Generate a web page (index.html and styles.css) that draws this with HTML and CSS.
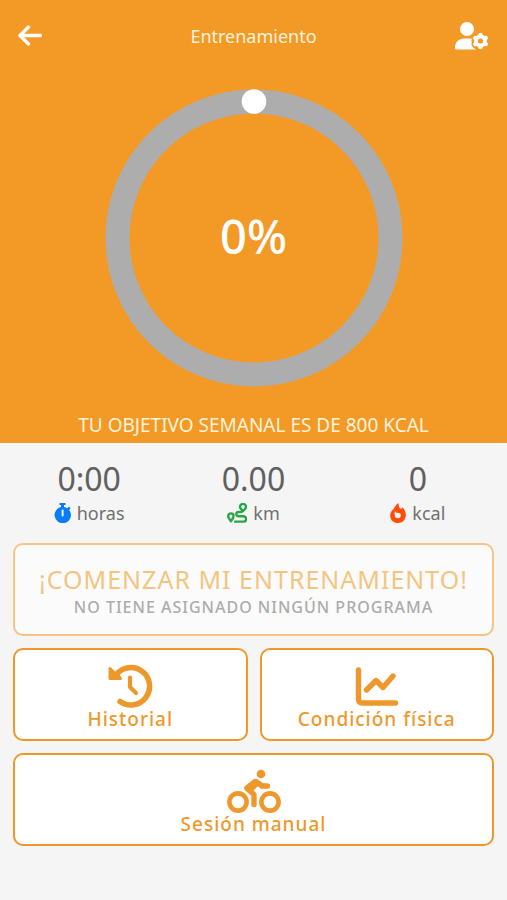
FILE: index.html
```html
<!DOCTYPE html>
<html lang="es">
<head>
<meta charset="utf-8">
<meta name="viewport" content="width=device-width, initial-scale=1">
<title>Entrenamiento</title>
<link rel="stylesheet" href="styles.css">
</head>
<body>
<header class="hero">
  <nav class="topbar">
    <a class="nav-link" href="#" aria-label="Volver">
      <svg width="26" height="24" viewBox="0 0 26 24" fill="none" stroke="currentColor" stroke-width="3.400" stroke-linecap="round" stroke-linejoin="round"><path d="M2 11.500H22.500M10.500 3L2 11.500L10.500 20"/></svg>
    </a>
    <h1 class="title">Entrenamiento</h1>
    <a class="nav-link nav-end" href="#" aria-label="Ajustes de usuario">
      <svg width="34" height="28" viewBox="0 0 34 28" fill="currentColor">
        <circle cx="12" cy="7" r="7"/>
        <path d="M0 26C0 20 4 16.500 9 16.500H15Q16.500 16.500 17.500 16.900Q15.500 18 17 20Q15.500 22 17.500 24.500Q18.500 26.500 21 27.500H1.500Q0 27.500 0 26Z"/>
        <g transform="translate(25.500 19)" stroke="currentColor">
          <circle r="4.500" fill="none" stroke-width="3.800"/>
          <path stroke-width="4.400" stroke-linejoin="round" stroke-linecap="round" d="M0-5.500V-6M0 5.500V6M4.800-2.800L5.200-3M-4.800-2.800L-5.200-3M4.800 2.800L5.200 3M-4.800 2.800L-5.200 3"/>
        </g>
      </svg>
    </a>
  </nav>
  <div class="progress">
    <svg class="ring" viewBox="0 0 298 298" aria-hidden="true">
      <circle cx="149" cy="149" r="136.500" fill="none" stroke="#adadad" stroke-width="24"/>
      <circle cx="149" cy="12.500" r="12.300" fill="#fff"/>
    </svg>
    <strong class="percent">0%</strong>
  </div>
  <p class="goal">TU OBJETIVO SEMANAL ES DE 800 KCAL</p>
</header>
<main>
  <section class="stats">
    <div class="stat">
      <span class="value">0:00</span>
      <span class="unit">
        <svg width="17" height="20" viewBox="0 0 17 20"><path fill="#087df5" d="M5.500 0H11.500V2H10V4Q12 4.300 13.300 5.200L15 3.600L16.600 5.200L15.200 7Q17 9.200 17 11.800A8.200 8.200 0 1 1 7 4V2H5.500Z"/><path d="M8.600 7.500V12.500" stroke="#f5f5f5" stroke-width="2" stroke-linecap="round"/></svg>
        horas</span>
    </div>
    <div class="stat">
      <span class="value">0.00</span>
      <span class="unit">
        <svg width="20" height="20" viewBox="0 0 20 20" fill="none" stroke="#28a745" stroke-width="2.400" stroke-linecap="round" stroke-linejoin="round"><path d="M16 8C14.800 7 13 5.500 13 3.900A3 3 0 0 1 19 3.900C19 5.500 17.200 7 16 8ZM3.900 18.200C2.700 16.700 1.200 14.700 1.200 13.100A2.700 2.700 0 0 1 6.600 13.100C6.600 14.700 5.100 16.700 3.900 18.200Z"/><path d="M14.500 9H11.500A2.100 2.100 0 0 0 11.500 13.300H16.500A2.600 2.600 0 0 1 16.500 18.600H8"/></svg>
        km</span>
    </div>
    <div class="stat">
      <span class="value">0</span>
      <span class="unit">
        <svg width="16" height="20" viewBox="0 0 16 20"><path fill="#ff4d08" d="M8.500 0C9 2 8.500 3.500 9.600 5C10.500 6.200 12 6 12.200 4.300C14.600 6.300 15.800 9 15.800 12C15.800 16.800 12.400 20 8 20C3.500 20 .2 17 .2 12.700C.2 10 1.200 8.200 2.800 6.800C5 4.800 5.500 1.500 8.500 0Z"/><path fill="#f5f5f5" d="M5.200 7.500C5.200 9.200 6 9.800 7.300 9.900C9.800 9.500 10.800 10.800 10.800 12.200A3 3 0 0 1 4.800 12.200C4.400 10.500 4.600 9 5.200 7.500Z"/></svg>
        kcal</span>
    </div>
  </section>
  <section class="actions">
    <button class="card wide" type="button" disabled>
      <span class="start">¡COMENZAR MI ENTRENAMIENTO!</span>
      <span class="note">NO TIENE ASIGNADO NINGÚN PROGRAMA</span>
    </button>
    <button class="card" type="button">
      <svg width="46" height="46" viewBox="0 0 46 46" fill="none" stroke="currentColor" stroke-linecap="round" stroke-linejoin="round"><path stroke-width="5.500" d="M9 12A18.700 18.700 0 1 1 13 38.500"/><path fill="currentColor" stroke-width="3" d="M3 5.500V15.500H13.500L11 12.500L7 9.500Z"/><path stroke-width="4.200" d="M23 14.500V24L29 30"/></svg>
      <span class="label">Historial</span>
    </button>
    <button class="card" type="button">
      <svg width="46" height="46" viewBox="0 0 46 46" fill="none" stroke="currentColor" stroke-width="5.400" stroke-linecap="round" stroke-linejoin="round"><path d="M4.500 7V36Q4.500 40 8.500 40H41.500M12.500 27L22 17.500L29 24.500L39 13"/></svg>
      <span class="label">Condición física</span>
    </button>
    <button class="card wide" type="button">
      <svg width="54" height="46" viewBox="0 0 54 46" fill="none" stroke="currentColor" stroke-linecap="round" stroke-linejoin="round"><circle cx="11" cy="34" r="8.600" stroke-width="4.600"/><circle cx="43" cy="34" r="8.600" stroke-width="4.600"/><circle cx="34" cy="6" r="4.300" fill="currentColor" stroke="none"/><path stroke-width="5.400" d="M40.500 18H35L29 13.500L20 20.500L27 26.500V36.500"/><path fill="currentColor" stroke-width="3" d="M27.500 12.500L19 19.500L24 23L31 16Z"/></svg>
      <span class="label">Sesión manual</span>
    </button>
  </section>
</main>
</body>
</html>
```
FILE: styles.css
```css
* {
  box-sizing: border-box;
}

body {
  margin: 0;
  min-height: 100vh;
  background: #f5f5f5;
  color: #606060;
  font-family: "Noto Sans", "Open Sans", sans-serif;
}

svg {
  display: block;
  flex: none;
}

.hero {
  background: #f39a26;
  color: #fff;
  padding: 0 18px 4px;
}

.topbar {
  display: grid;
  grid-template-columns: 1fr auto 1fr;
  align-items: center;
  height: 72px;
}

.nav-link {
  color: inherit;
}

.nav-end {
  justify-self: end;
}

.title {
  margin: 0;
  font-size: 18px;
  font-weight: 400;
  line-height: 24px;
  color: #fff3dc;
}

.progress {
  display: grid;
  place-items: center;
  margin-top: 17px;
}

.progress > * {
  grid-area: 1 / 1;
}

.ring {
  width: 100%;
  max-width: 298px;
}

.percent {
  padding-bottom: 4px;
  font-size: 47px;
  font-weight: 500;
  line-height: 56px;
}

.goal {
  margin: 24px 0 0;
  font-size: 19px;
  line-height: 28px;
  text-align: center;
  color: #fff3dc;
}

.stats {
  display: grid;
  grid-template-columns: repeat(3, 1fr);
  padding: 16px 7px 0;
}

.stat {
  display: flex;
  flex-direction: column;
  align-items: center;
}

.value {
  font-size: 32px;
  line-height: 40px;
}

.unit {
  display: flex;
  align-items: center;
  gap: 6px;
  font-size: 18px;
  line-height: 28px;
  color: #707070;
}

.actions {
  display: grid;
  grid-template-columns: 1fr 1fr;
  gap: 12px;
  padding: 16px 13px;
}

.card {
  display: flex;
  flex-direction: column;
  align-items: center;
  justify-content: center;
  min-height: 93px;
  padding: 2px 0 0;
  border: 2px solid #ee982b;
  border-radius: 10px;
  background: #fff;
  color: #ee982b;
  font-family: inherit;
}

.card:disabled {
  border-color: #f5c486;
  background: #fbfbfb;
  color: #f3c581;
}

.wide {
  grid-column: 1 / -1;
}

.start {
  font-size: 25px;
  line-height: 32px;
  letter-spacing: 1px;
}

.note {
  font-size: 16px;
  font-weight: 500;
  line-height: 24px;
  letter-spacing: 1px;
  color: #acacac;
}

.label {
  font-size: 19px;
  font-weight: 500;
  line-height: 20px;
  letter-spacing: 1px;
}
```
